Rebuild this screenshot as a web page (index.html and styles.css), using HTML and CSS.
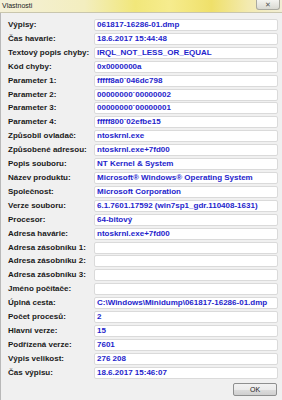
FILE: index.html
```html
<!DOCTYPE html>
<html lang="cs">
<head>
  <meta charset="UTF-8" />
  <meta name="viewport" content="width=device-width, initial-scale=1.0"/>
  <title>Vlastnosti</title>
  <link rel="stylesheet" href="styles.css">
</head>
<body>
  <div class="window">
    <div class="titlebar">
      <span class="title">Vlastnosti</span>
      <span class="close">&#x2715;</span>
    </div>

    <div class="content">
      <div class="props">
        <span class="label">Výpisy:</span><span class="value">061817-16286-01.dmp</span>
        <span class="label">Čas havarie:</span><span class="value">18.6.2017 15:44:48</span>
        <span class="label">Textový popis chyby:</span><span class="value">IRQL_NOT_LESS_OR_EQUAL</span>
        <span class="label">Kód chyby:</span><span class="value">0x0000000a</span>
        <span class="label">Parameter 1:</span><span class="value">fffff8a0`046dc798</span>
        <span class="label">Parameter 2:</span><span class="value">00000000`00000002</span>
        <span class="label">Parameter 3:</span><span class="value">00000000`00000001</span>
        <span class="label">Parameter 4:</span><span class="value">fffff800`02efbe15</span>
        <span class="label">Způsobil ovladač:</span><span class="value">ntoskrnl.exe</span>
        <span class="label">Způsobené adresou:</span><span class="value">ntoskrnl.exe+7fd00</span>
        <span class="label">Popis souboru:</span><span class="value">NT Kernel &amp; System</span>
        <span class="label">Název produktu:</span><span class="value">Microsoft® Windows® Operating System</span>
        <span class="label">Společnost:</span><span class="value">Microsoft Corporation</span>
        <span class="label">Verze souboru:</span><span class="value">6.1.7601.17592 (win7sp1_gdr.110408-1631)</span>
        <span class="label">Procesor:</span><span class="value">64-bitový</span>
        <span class="label">Adresa havárie:</span><span class="value">ntoskrnl.exe+7fd00</span>
        <span class="label">Adresa zásobníku 1:</span><span class="value"></span>
        <span class="label">Adresa zásobníku 2:</span><span class="value"></span>
        <span class="label">Adresa zásobníku 3:</span><span class="value"></span>
        <span class="label">Jméno počítače:</span><span class="value"></span>
        <span class="label">Úplná cesta:</span><span class="value">C:\Windows\Minidump\061817-16286-01.dmp</span>
        <span class="label">Počet procesů:</span><span class="value">2</span>
        <span class="label">Hlavní verze:</span><span class="value">15</span>
        <span class="label">Podřízená verze:</span><span class="value">7601</span>
        <span class="label">Výpis velikost:</span><span class="value">276 208</span>
        <span class="label">Čas výpisu:</span><span class="value">18.6.2017 15:46:07</span>
      </div>

      <div class="buttons">
        <button class="btn">OK</button>
      </div>
    </div>
  </div>
</body>
</html>
```

FILE: styles.css
```css
body {
  margin: 0;
  font-family: "Liberation Sans", Arial, sans-serif;
  font-size: 8px;
  background: #f0f0f0;
}
.window {
  width: 282px;
  height: 400px;
  overflow: hidden;
  background: #f0f0f0;
}
.titlebar {
  position: relative;
  height: 12px;
  background: linear-gradient(90deg, #f4f0d8 0%, #f3eebf 30%, #f1e77a 48%, #f6ec8e 60%, #efe06a 75%, #f3eab0 88%, #f2eed6 100%);
  border-bottom: 1px solid #c9c6ad;
}
.title {
  display: block;
  padding: 2px 0 0 2px;
  font-size: 7px;
  color: #222;
}
.close {
  position: absolute;
  top: 0;
  right: 2px;
  width: 22px;
  height: 9px;
  border: 1px solid #a9a9a0;
  border-top: none;
  border-radius: 0 0 3px 3px;
  background: linear-gradient(#f4f4f0, #d9d9d2);
  font-size: 7px;
  line-height: 9px;
  text-align: center;
  color: #555;
}
.content {
  border-left: 1px solid #b8b8b8;
  height: 387px;
  padding: 6px 5px 0 7px;
  box-sizing: border-box;
}
.props {
  display: grid;
  grid-template-columns: 86px 184px;
  grid-auto-rows: 12px;
  row-gap: 1.92px;
}
.label {
  line-height: 12px;
  font-weight: bold;
  color: #1a1a1a;
  white-space: nowrap;
}
.value {
  background: #fff;
  border: 1px solid #dadada;
  border-radius: 2px;
  padding-left: 2px;
  line-height: 10px;
  font-weight: bold;
  color: #1e1ecc;
  white-space: nowrap;
  overflow: hidden;
}
.buttons {
  display: flex;
  justify-content: flex-end;
  margin-top: 4px;
}
.btn {
  width: 44px;
  height: 13px;
  padding: 0;
  border: 1px solid #8e8f8f;
  border-radius: 2px;
  background: linear-gradient(#f2f2f2 0%, #ebebeb 50%, #dddddd 51%, #cfcfcf 100%);
  font-family: "Liberation Sans", Arial, sans-serif;
  font-size: 7px;
  color: #222;
}
```
